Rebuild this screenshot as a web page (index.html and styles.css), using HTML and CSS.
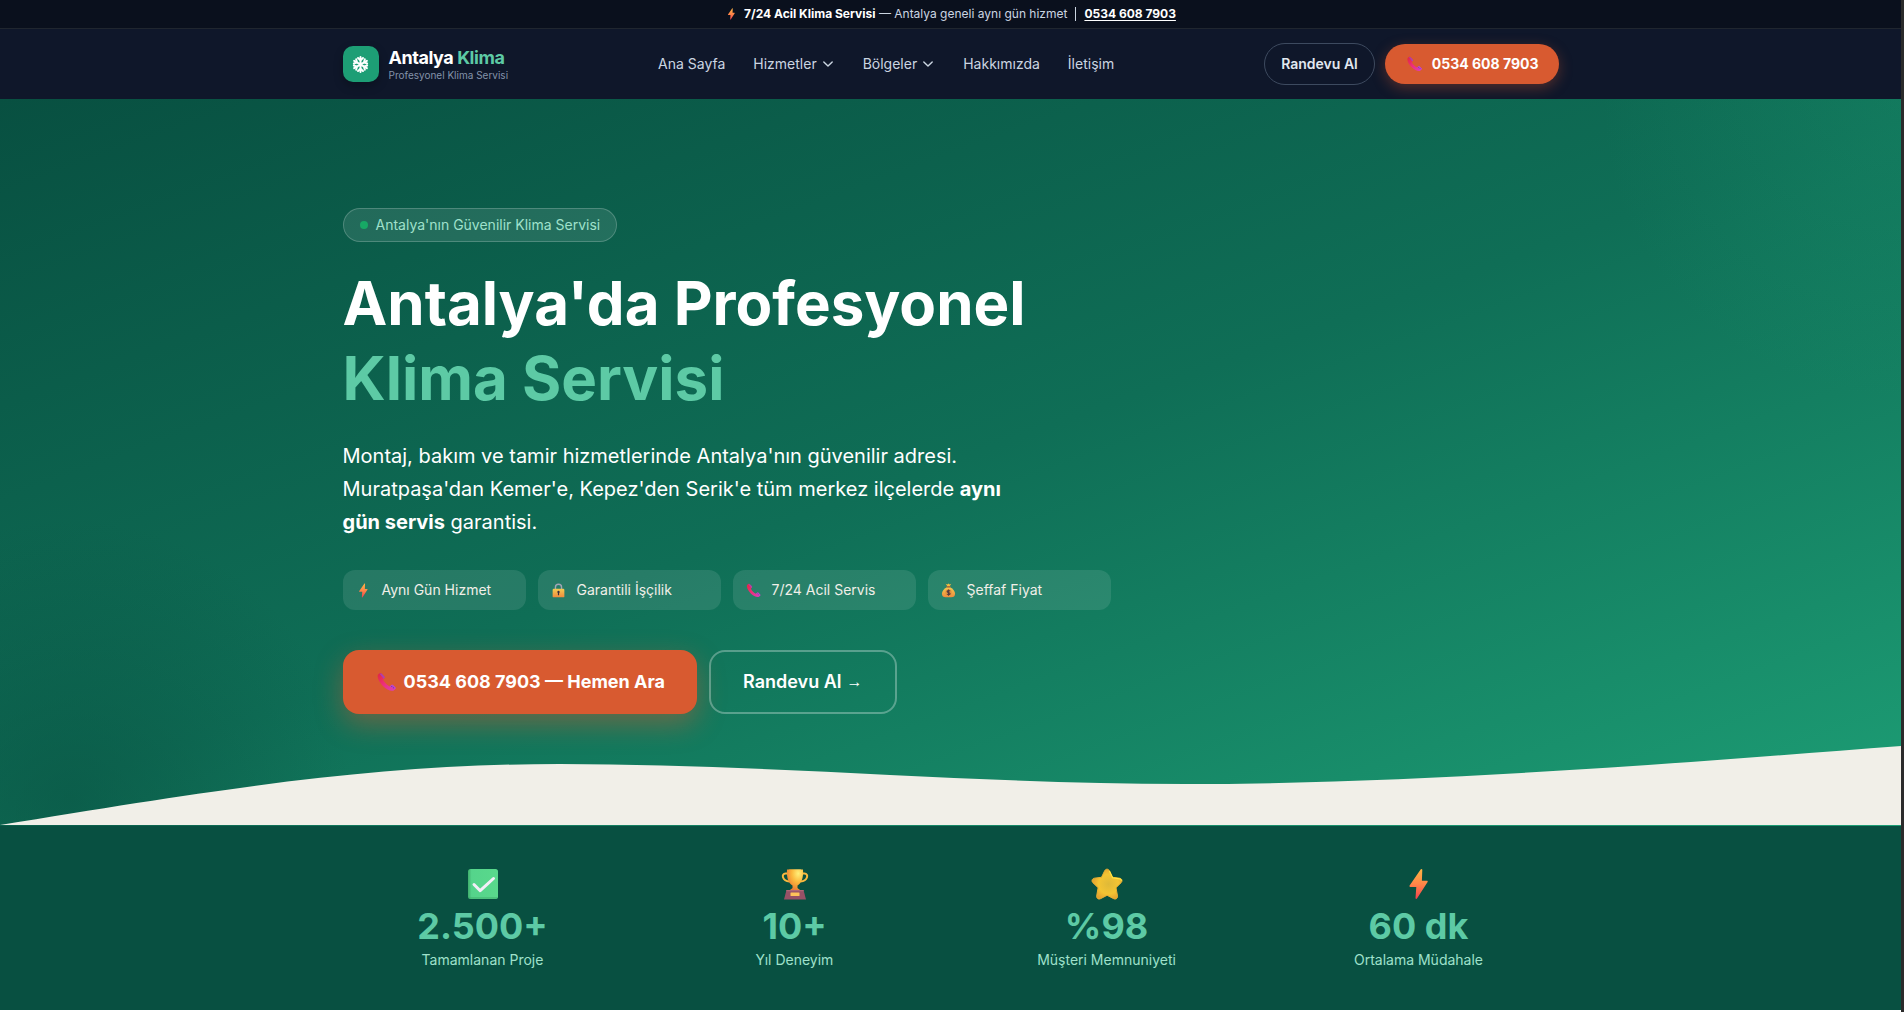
FILE: index.html
```html
<!DOCTYPE html>
<html lang="tr">
<head>
	<meta charset="utf-8" />
	<meta name="viewport" content="width=device-width, initial-scale=1" />
	<title>Antalya Klima</title>
	<link rel="stylesheet" href="styles.css">
</head>
<body>

<!-- icons -->
<svg class="sprite" width="0" height="0" aria-hidden="true">
	<defs>
		<linearGradient id="gBolt" x1="0" y1="0" x2="0" y2="1">
			<stop offset="0" stop-color="#ffb443" />
			<stop offset="0.5" stop-color="#ff8648" />
			<stop offset="1" stop-color="#f3404e" />
		</linearGradient>
		<linearGradient id="gPhone" x1="0" y1="0" x2="1" y2="1">
			<stop offset="0" stop-color="#e0263f" />
			<stop offset="0.5" stop-color="#ee2f7c" />
			<stop offset="1" stop-color="#d93fc0" />
		</linearGradient>
		<linearGradient id="gLock" x1="0" y1="0" x2="0" y2="1">
			<stop offset="0" stop-color="#f2cb52" />
			<stop offset="1" stop-color="#f08a3c" />
		</linearGradient>
		<radialGradient id="gCup" cx="0.7" cy="0.2" r="0.8">
			<stop offset="0" stop-color="#fff07a" />
			<stop offset="0.5" stop-color="#fbb83c" />
			<stop offset="1" stop-color="#ea7c36" />
		</radialGradient>
		<radialGradient id="gStar" cx="0.55" cy="0.5" r="0.55">
			<stop offset="0" stop-color="#dfb938" />
			<stop offset="0.6" stop-color="#f3c433" />
			<stop offset="1" stop-color="#e4a02e" />
		</radialGradient>
		<linearGradient id="gCheck" x1="0" y1="0" x2="1" y2="0">
			<stop offset="0" stop-color="#3fae6c" />
			<stop offset="0.12" stop-color="#55d48b" />
			<stop offset="1" stop-color="#59d98c" />
		</linearGradient>
		<symbol id="bolt" viewBox="0 0 32 32">
			<path fill="url(#gBolt)" d="M17.600 1.500 6.600 17.600c-.4.6 0 1.300.7 1.300h6l-.8 11.200c0 1 1 1.200 1.500.5l10.600-16.500c.4-.6 0-1.300-.7-1.300h-5l.4-11c0-1-1.100-1.200-1.700-.3z" />
		</symbol>
		<symbol id="phone" viewBox="0 0 32 32">
			<path fill="url(#gPhone)" d="M4.500 2.200 2.200 4.500C.6 8.500 4.500 17 10.200 22.300c5.700 5.600 12.700 8.700 17.300 7.200l2.600-2.500c.8-.8.8-1.800 0-2.600l-3.700-3.600c-.8-.8-2-.8-2.800 0l-2.300 2.200c-3.700-1.300-9.400-6.900-10.900-11l2.200-2.200c.8-.8.8-1.900 0-2.700L8.200 2.400c-1-1.100-2.700-1.200-3.700-.2z" />
			<path fill="#9a4ac8" d="m4.500 2.200 3.700.2 4.400 4.700c.8.800.8 1.900 0 2.700l-1.100 1z" opacity=".75" />
			<path fill="#b04fd6" d="m21.300 23 2.300-2.200c.8-.8 2-.8 2.800 0l3.700 3.600c.8.800.8 1.800 0 2.600z" opacity=".8" />
			<circle cx="24.500" cy="23" r=".8" fill="#5a2c9c" /><circle cx="27" cy="25.300" r=".8" fill="#5a2c9c" />
		</symbol>
		<symbol id="lock" viewBox="0 0 32 32">
			<path fill="none" stroke="#a3a5b5" stroke-width="3" d="M9.500 14V9a6.500 6.500 0 0 1 13 0v5" />
			<rect x="3.500" y="12.500" width="25" height="18" rx="2.500" fill="url(#gLock)" />
			<path fill="#3a2a3c" d="M16 16.500a2.600 2.600 0 0 0-1.300 4.800V25c0 1.600 2.600 1.600 2.600 0v-3.700A2.600 2.600 0 0 0 16 16.500z" />
		</symbol>
		<symbol id="money" viewBox="0 0 32 32">
			<path fill="#f6b93e" d="m10 1.500 3.500 1.500L16 1l2.500 2L22 1.500 18.500 7h-5z" />
			<path fill="url(#gLock)" d="M12.500 9h7C26 12 30 18 30 23c0 5-3 7.500-8 7.500H10c-5 0-8-2.500-8-7.500 0-5 4-11 10.500-14z" />
			<rect x="11.500" y="7" width="9" height="2.500" rx="1" fill="#c7632f" />
			<circle cx="16" cy="20.500" r="7" fill="#e8973d" />
			<path fill="none" stroke="#5b3a3e" stroke-width="2.400" d="M19.300 17.500c-1-2-6.300-2-6.300.6 0 3 6.400 1.700 6.400 4.700 0 2.600-5.600 2.600-6.600.4M16 14v13" />
		</symbol>
		<symbol id="check" viewBox="0 0 32 32">
			<rect x="1" y="1" width="30" height="30" rx="2.500" fill="url(#gCheck)" />
			<path fill="#3fae6c" d="M1.500 29h29a2.500 2.500 0 0 1-2.500 2H3.500a2 2 0 0 1-2-2z" opacity=".5" />
			<path fill="none" stroke="#f3eef8" stroke-width="3" stroke-linecap="round" stroke-linejoin="round" d="m7 16.500 6.200 6.200L26.500 10.500" />
		</symbol>
		<symbol id="trophy" viewBox="0 0 32 32">
			<path fill="none" stroke="#f9b93f" stroke-width="2" d="M9 5.500H6.500C2 5.500 3 13 10.500 13.500M23 5.500h2.500C30 5.500 29 13 21.500 13.500" />
			<path fill="url(#gCup)" d="M8 1.500c0-.5 16-.5 16 0 .6 8.500-1.500 14-5.500 16v2.500c1 1 2.500 1.500 3 3h-11c.5-1.500 2-2 3-3v-2.500C9.500 15.500 7.400 10 8 1.500z" />
			<path fill="#965166" d="M7.500 22h17l2.500 9.500H5z" />
			<path fill="#ae6777" d="M7.500 22h17l.3 1.200H7.200z" />
			<rect x="11.500" y="24.500" width="9" height="3.500" rx=".5" fill="#fdc25a" />
		</symbol>
		<symbol id="star" viewBox="0 0 32 32">
			<path fill="url(#gStar)" stroke="#eab133" stroke-width="1" stroke-linejoin="round" d="M13.700 2.700c1-2 3.700-2 4.700 0l3.100 6.600 7.100.9c2.300.3 3.200 2.900 1.500 4.500l-5.100 5 1.500 8.200c.4 2.300-1.800 3.900-3.800 2.800l-6.600-3.400-6.600 3.400c-2 1.100-4.200-.5-3.800-2.800l1.400-8.200-5.200-5C.200 13.100 1.100 10.500 3.400 10.200l7.100-.9z" />
			<path fill="none" stroke="#ffe640" stroke-width="1.200" stroke-linecap="round" d="m18.600 3.500 3 6.300 7.200 1c1 .1 1.500.8 1.500 1.500" />
		</symbol>
		<symbol id="snow" viewBox="0 0 24 24">
			<g fill="none" stroke="#fff" stroke-width="2.800" stroke-linecap="round" stroke-linejoin="round">
				<path d="M12 1.500v21M3 6.750l18 10.500M21 6.750 3 17.250" />
				<path d="M8.500 2.800 12 6l3.500-3.200M8.500 21.200 12 18l3.500 3.200M2.600 10.500l4.400-1.500-1.100-4.500M21.400 13.500 17 15l1.100 4.500M21.400 10.500 17 9l1.100-4.500M2.600 13.500 7 15l-1.100 4.500" />
			</g>
		</symbol>
		<symbol id="chevron" viewBox="0 0 20 20">
			<path fill="none" stroke="currentColor" stroke-width="2" stroke-linecap="round" stroke-linejoin="round" d="m4 7 6 6 6-6" />
		</symbol>
	</defs>
</svg>

<div class="topbar">
	<svg class="topbar-icon"><use href="#bolt" /></svg>
	<p><strong>7/24 Acil Klima Servisi</strong> — Antalya geneli aynı gün hizmet</p>
	<span class="topbar-sep"></span>
	<a href="tel:05346087903">0534 608 7903</a>
</div>

<header class="header">
	<div class="container header-inner">
		<a class="logo" href="#">
			<span class="logo-mark"><svg><use href="#snow" /></svg></span>
			<span class="logo-text">
				<span class="logo-name">Antalya <em>Klima</em></span>
				<span class="logo-sub">Profesyonel Klima Servisi</span>
			</span>
		</a>
		<nav class="nav">
			<a href="#">Ana Sayfa</a>
			<a href="#">Hizmetler <svg><use href="#chevron" /></svg></a>
			<a href="#">Bölgeler <svg><use href="#chevron" /></svg></a>
			<a href="#">Hakkımızda</a>
			<a href="#">İletişim</a>
		</nav>
		<div class="actions">
			<a class="pill pill-outline" href="#">Randevu Al</a>
			<a class="pill pill-call" href="tel:05346087903"><svg><use href="#phone" /></svg>0534 608 7903</a>
		</div>
	</div>
</header>

<main>
	<section class="hero">
		<div class="container">
			<div class="badge"><span class="badge-dot"></span>Antalya'nın Güvenilir Klima Servisi</div>
			<h1>Antalya'da Profesyonel <span>Klima Servisi</span></h1>
			<p class="lead">Montaj, bakım ve tamir hizmetlerinde Antalya'nın güvenilir adresi. Muratpaşa'dan Kemer'e, Kepez'den Serik'e tüm merkez ilçelerde <strong>aynı gün servis</strong> garantisi.</p>
			<ul class="features">
				<li><svg><use href="#bolt" /></svg>Aynı Gün Hizmet</li>
				<li><svg><use href="#lock" /></svg>Garantili İşçilik</li>
				<li><svg><use href="#phone" /></svg>7/24 Acil Servis</li>
				<li><svg><use href="#money" /></svg>Şeffaf Fiyat</li>
			</ul>
			<div class="cta">
				<a class="btn btn-call" href="tel:05346087903"><svg><use href="#phone" /></svg>0534 608 7903 — Hemen Ara</a>
				<a class="btn btn-outline" href="#">Randevu Al <span class="arrow">→</span></a>
			</div>
		</div>
		<svg class="wave" viewBox="0 0 1440 80" preserveAspectRatio="none" aria-hidden="true">
			<path d="M0 80C180 41 290 19 424 19C580 19 740 39 897 39C1080 39 1270 18 1440 1V80Z" />
		</svg>
	</section>

	<section class="stats">
		<div class="container stats-grid">
			<div class="stat">
				<svg><use href="#check" /></svg>
				<div class="stat-value">2.500+</div>
				<div class="stat-label">Tamamlanan Proje</div>
			</div>
			<div class="stat">
				<svg><use href="#trophy" /></svg>
				<div class="stat-value">10+</div>
				<div class="stat-label">Yıl Deneyim</div>
			</div>
			<div class="stat">
				<svg><use href="#star" /></svg>
				<div class="stat-value">%98</div>
				<div class="stat-label">Müşteri Memnuniyeti</div>
			</div>
			<div class="stat">
				<svg><use href="#bolt" /></svg>
				<div class="stat-value">60 dk</div>
				<div class="stat-label">Ortalama Müdahale</div>
			</div>
		</div>
	</section>
</main>

</body>
</html>
```
FILE: styles.css
```css
*{
	box-sizing: border-box;
}
body{
	margin: 0;
	min-height: 100vh;
	border-right: 3px solid #2b2b2b;
	background: #fff;
	font-family: Inter, "Liberation Sans", sans-serif;
	font-size: 14px;
	line-height: 20px;
}
h1, p, ul{
	margin: 0;
	padding: 0;
}
a{
	color: inherit;
	text-decoration: none;
}
svg{
	flex-shrink: 0;
}
.sprite{
	position: absolute;
}
.container{
	max-width: 1280px;
	margin: 0 auto;
	padding: 0 32px;
}
/* top bar */
.topbar{
	display: flex;
	justify-content: center;
	align-items: center;
	padding: 6px 16px;
	border-bottom: 1px solid #20262f;
	background: #0a101d;
	color: #cbd5e1;
	font-size: 12px;
	line-height: 16px;
}
.topbar strong{
	color: #fff;
}
.topbar-icon{
	width: 13px;
	height: 12px;
	margin-right: 6px;
}
.topbar-sep{
	width: 1px;
	height: 14px;
	margin: 0 8px;
	background: #cbd5e1;
}
.topbar a{
	color: #fff;
	font-weight: 700;
	text-decoration: underline;
	text-underline-offset: 2px;
}
/* header */
.header{
	background: #0f172a;
}
.header-inner{
	display: flex;
	justify-content: space-between;
	align-items: center;
	height: 70px;
}
.logo{
	display: flex;
	align-items: center;
	gap: 10px;
}
.logo-mark{
	display: flex;
	justify-content: center;
	align-items: center;
	width: 36px;
	height: 36px;
	border-radius: 10px;
	background: #1d9e75;
	box-shadow: 0 4px 10px rgba(0, 0, 0, 0.25);
}
.logo-mark svg{
	width: 17px;
	height: 17px;
}
.logo-text{
	display: flex;
	flex-direction: column;
}
.logo-name{
	color: #fff;
	font-size: 18px;
	font-weight: 700;
	letter-spacing: -0.025em;
	line-height: 22px;
}
.logo-name em{
	color: #5dcaa5;
	font-style: normal;
}
.logo-sub{
	color: #8392a9;
	font-size: 10px;
	line-height: 12px;
}
.nav{
	display: flex;
	gap: 28px;
	color: #cbd5e1;
}
.nav a{
	display: flex;
	align-items: center;
	gap: 4px;
}
.nav svg{
	width: 14px;
	height: 14px;
}
.actions{
	display: flex;
	align-items: center;
	gap: 10px;
}
.pill{
	display: flex;
	align-items: center;
	border-radius: 21px;
}
.pill-outline{
	padding: 10px 16px;
	border: 1px solid #3d4a5f;
	color: #e2e8f0;
	font-weight: 600;
}
.pill-call{
	gap: 8px;
	padding: 10px 20px;
	background: #d85a30;
	box-shadow: 0 4px 14px rgba(216, 90, 48, 0.35);
	color: #fff;
	font-weight: 700;
}
.pill-call svg{
	width: 19px;
	height: 16px;
}
/* hero */
.hero{
	position: relative;
	padding: 109px 0 112px;
	background:
		radial-gradient(circle at 70px 700px, rgba(8, 80, 65, 0.55), rgba(8, 80, 65, 0) 280px),
		radial-gradient(circle at 100% 0, rgba(29, 158, 117, 0.25), rgba(29, 158, 117, 0) 300px),
		linear-gradient(160deg, #085041 0%, #0f6e56 50%, #1d9e75 100%);
	color: #fff;
}
.badge{
	display: inline-flex;
	align-items: center;
	gap: 8px;
	padding: 6px 16px;
	border: 1px solid rgba(255, 255, 255, 0.2);
	border-radius: 17px;
	background: rgba(255, 255, 255, 0.1);
	color: #9fe1cb;
	vertical-align: top;
}
.badge-dot{
	width: 8px;
	height: 8px;
	border-radius: 50%;
	background: #17a865;
}
.hero h1{
	max-width: 768px;
	margin-top: 24px;
	font-size: 60px;
	font-weight: 700;
	line-height: 75px;
}
.hero h1 span{
	display: block;
	color: #5dcaa5;
}
.lead{
	max-width: 672px;
	margin: 24px 0 31px;
	font-size: 20px;
	line-height: 33px;
}
.features{
	display: grid;
	grid-template-columns: repeat(4, 1fr);
	gap: 12px;
	max-width: 768px;
	margin-bottom: 40px;
	list-style: none;
}
.features li{
	display: flex;
	align-items: center;
	gap: 10px;
	padding: 10px 12px;
	border-radius: 12px;
	background: rgba(255, 255, 255, 0.1);
	color: #f1efe8;
}
.features svg{
	width: 17px;
	height: 15px;
}
.cta{
	display: flex;
	gap: 12px;
}
.btn{
	display: flex;
	align-items: center;
	border-radius: 16px;
	font-size: 18px;
	font-weight: 700;
	line-height: 28px;
}
.btn-call{
	gap: 6px;
	padding: 18px 32px;
	background: #d85a30;
	box-shadow: 0 10px 28px rgba(216, 90, 48, 0.45);
}
.btn-call svg{
	width: 23px;
	height: 20px;
}
.btn-outline{
	gap: 5px;
	padding: 16px 32px;
	border: 2px solid rgba(255, 255, 255, 0.3);
	font-weight: 600;
}
.arrow{
	font-family: "Liberation Sans", sans-serif;
	font-size: 16px;
	font-weight: 400;
}
.wave{
	position: absolute;
	left: 0;
	bottom: 1px;
	width: 100%;
	height: 80px;
	fill: #f1efe8;
}
/* stats */
.stats{
	padding: 40px 0;
	background: #085041;
}
.stats-grid{
	display: grid;
	grid-template-columns: repeat(4, 1fr);
	gap: 32px;
}
.stat{
	display: flex;
	flex-direction: column;
	align-items: center;
	gap: 4px;
}
.stat svg{
	width: 32px;
	height: 32px;
	margin: 2px 0;
}
.stat-value{
	color: #5dcaa5;
	font-size: 36px;
	font-weight: 700;
	line-height: 40px;
}
.stat-label{
	color: #9fe1cb;
}
```
